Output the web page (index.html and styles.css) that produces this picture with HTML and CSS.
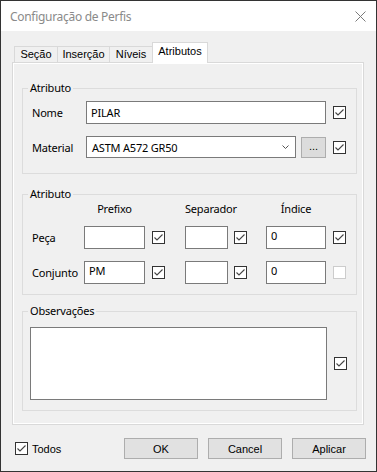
FILE: index.html
```html
<!DOCTYPE html>
<html lang="pt-BR">
<head>
  <meta charset="UTF-8" />
  <title>Configuração de Perfis</title>
  <link rel="stylesheet" href="styles.css">
</head>
<body>

<svg class="defs" width="0" height="0">
  <symbol id="chk" viewBox="0 0 13 13">
    <rect x="0.5" y="0.5" width="12" height="12" fill="#fff" stroke="#333"/>
    <path d="M2.5 6.5 L5 9 L10.5 3.5" fill="none" stroke="#444" stroke-width="1.1"/>
  </symbol>
  <symbol id="chk-off" viewBox="0 0 13 13">
    <rect x="0.5" y="0.5" width="12" height="12" fill="#fff" stroke="#ccc"/>
  </symbol>
</svg>

<div class="window">
  <div class="titlebar">
    <span class="title">Configuração de Perfis</span>
    <svg class="close" width="11" height="11" viewBox="0 0 11 11">
      <path d="M0.5 0.5 L10.5 10.5 M10.5 0.5 L0.5 10.5" stroke="#7a7a7a" stroke-width="1"/>
    </svg>
  </div>

  <div class="content">
    <div class="tabs">
      <div class="tab tab-secao">Seção</div>
      <div class="tab tab-insercao">Inserção</div>
      <div class="tab tab-niveis">Níveis</div>
      <div class="tab active">Atributos</div>
    </div>

    <div class="page">
      <fieldset class="group g-first">
        <legend>Atributo</legend>
        <div class="group-body g1">
          <div class="row">
            <label class="lbl lbl-wide" for="nome">Nome</label>
            <input class="txt txt-nome" type="text" id="nome" value="PILAR">
            <svg class="chk"><use href="#chk"/></svg>
          </div>
          <div class="row">
            <label class="lbl lbl-wide">Material</label>
            <div class="combo">
              <span>ASTM A572 GR50</span>
              <svg class="arrow" width="7" height="4" viewBox="0 0 7 4"><path d="M0.5 0.5 L3.5 3.5 L6.5 0.5" fill="none" stroke="#555"/></svg>
            </div>
            <button class="dots">...</button>
            <svg class="chk"><use href="#chk"/></svg>
          </div>
        </div>
      </fieldset>

      <fieldset class="group g-second">
        <legend>Atributo</legend>
        <div class="group-body g2">
          <div class="row head">
            <span class="lbl"></span>
            <span class="h h-pre">Prefixo</span>
            <span class="h h-sep">Separador</span>
            <span class="h h-idx">Índice</span>
          </div>
          <div class="row">
            <label class="lbl">Peça</label>
            <input class="txt sm in-pre" type="text" value="">
            <svg class="chk"><use href="#chk"/></svg>
            <input class="txt sm in-sep" type="text" value="">
            <svg class="chk chk-sep"><use href="#chk"/></svg>
            <input class="txt sm in-idx" type="text" value="0">
            <svg class="chk"><use href="#chk"/></svg>
          </div>
          <div class="row">
            <label class="lbl">Conjunto</label>
            <input class="txt sm in-pre" type="text" value="PM">
            <svg class="chk"><use href="#chk"/></svg>
            <input class="txt sm in-sep" type="text" value="">
            <svg class="chk chk-sep"><use href="#chk"/></svg>
            <input class="txt sm in-idx" type="text" value="0">
            <svg class="chk"><use href="#chk-off"/></svg>
          </div>
        </div>
      </fieldset>

      <fieldset class="group g-third">
        <legend>Observações</legend>
        <div class="group-body g3">
          <div class="row">
            <textarea class="obs"></textarea>
            <svg class="chk"><use href="#chk"/></svg>
          </div>
        </div>
      </fieldset>
    </div>

    <div class="footer">
      <svg class="chk todos-chk"><use href="#chk"/></svg>
      <span class="todos">Todos</span>
      <button class="btn btn-ok">OK</button>
      <button class="btn">Cancel</button>
      <button class="btn">Aplicar</button>
    </div>
  </div>
</div>

</body>
</html>
```

FILE: styles.css
```css
body {
  margin: 0;
  background: #fff;
  font-family: "Noto Sans", sans-serif;
  font-size: 11px;
  letter-spacing: -0.2px;
  color: #000;
}

.defs {
  position: absolute;
}

.window {
  width: 377px;
  height: 472px;
  box-sizing: border-box;
  border: 1px solid #333;
  background: #f0f0f0;
  display: flex;
  flex-direction: column;
}

.titlebar {
  height: 30px;
  flex-shrink: 0;
  background: #fff;
  display: flex;
  align-items: center;
  justify-content: space-between;
  padding: 0 10px 0 9px;
}

.title {
  font-size: 12px;
  letter-spacing: -0.3px;
  color: #8a8a8a;
}

.content {
  padding: 11px 12px 0 11px;
}

/* tabs */
.tabs {
  display: flex;
  align-items: flex-end;
  height: 20px;
  padding-left: 2px;
  position: relative;
  z-index: 1;
}

.tab {
  height: 16px;
  box-sizing: border-box;
  border: 1px solid #d9d9d9;
  border-right: none;
  border-bottom: none;
  background: #f0f0f0;
  font-family: "Liberation Sans", Arial, sans-serif;
  font-size: 11px;
  letter-spacing: 0;
  line-height: 15px;
  text-align: center;
}

.tab-secao { width: 43px; }
.tab-insercao { width: 52px; }
.tab-niveis { width: 43px; }

.tab.active {
  width: 56px;
  height: 21px;
  margin-bottom: -1px;
  background: #fff;
  border-right: 1px solid #d9d9d9;
  line-height: 17px;
}

.page {
  height: 363px;
  box-sizing: border-box;
  border: 1px solid #d9d9d9;
  box-shadow: inset 0 0 0 1px #fff;
  padding: 0 6px 0 9px;
}

/* group boxes */
.group {
  margin: 0;
  padding: 0;
  border: 1px solid #dcdcdc;
  min-width: 0;
}

.group legend {
  margin-left: 5px;
  padding: 0 2px;
  line-height: 14px;
}

.g-first { margin-top: 18px; }
.g-second { margin-top: 13px; }
.g-third { margin-top: 9px; }

.g1 { padding: 6px 0 15px 9px; }
.g2 { padding: 1px 0 10px 9px; }
.g3 { padding: 9px 0 10px 7px; }

.row {
  display: flex;
  align-items: center;
}

.g1 .row + .row { margin-top: 12px; }
.g2 .row + .row { margin-top: 12px; }
.g2 .head + .row { margin-top: 10px; }

.lbl {
  width: 52px;
  flex-shrink: 0;
}

.lbl-wide {
  width: 54px;
}

.head {
  line-height: 14px;
}

.h {
  text-align: center;
}

.h-pre { width: 61px; }
.h-sep { width: 43px; margin-left: 40px; }
.h-idx { width: 60px; margin-left: 38px; }

/* fields */
.txt {
  box-sizing: border-box;
  height: 23px;
  margin: 0;
  border: 1px solid #7a7a7a;
  padding: 0 4px;
  background: #fff;
  font-family: "Noto Sans", sans-serif;
  font-size: 11px;
  letter-spacing: -0.2px;
  color: #000;
  outline: none;
}

.txt-nome { width: 240px; }

.txt.sm {
  padding: 0 4px 5px;
}

.in-pre { width: 61px; }
.in-sep { width: 43px; margin-left: 20px; }
.in-idx { width: 60px; margin-left: 19px; }

.chk {
  width: 13px;
  height: 13px;
  flex-shrink: 0;
  margin-left: 7px;
}

.chk-sep { margin-left: 6px; }

.combo {
  box-sizing: border-box;
  width: 210px;
  height: 22px;
  border: 1px solid #7a7a7a;
  background: #fff;
  display: flex;
  align-items: center;
  justify-content: space-between;
  padding: 0 6px 0 5px;
}

.arrow {
  display: block;
}

.dots {
  box-sizing: border-box;
  width: 25px;
  height: 21px;
  margin: 0 0 0 5px;
  padding: 0 0 3px;
  border: 1px solid #adadad;
  background: #dcdcdc;
  font-family: "Liberation Sans", Arial, sans-serif;
  font-size: 11px;
  line-height: 14px;
  color: #000;
}

.obs {
  box-sizing: border-box;
  width: 297px;
  height: 73px;
  margin: 0;
  border: 1px solid #7a7a7a;
  background: #fff;
  resize: none;
  outline: none;
}

/* footer */
.footer {
  display: flex;
  align-items: center;
  margin-top: 13px;
  margin-right: -2px;
  padding-left: 3px;
}

.todos-chk {
  margin-left: 0;
}

.todos {
  margin-left: 4px;
  font-family: "Liberation Sans", Arial, sans-serif;
  font-size: 11px;
  letter-spacing: 0;
}

.btn {
  box-sizing: border-box;
  width: 74px;
  height: 21px;
  margin: 0 0 0 10px;
  padding: 0;
  border: 1px solid #adadad;
  background: #e1e1e1;
  font-family: "Liberation Sans", Arial, sans-serif;
  font-size: 11px;
  letter-spacing: 0;
  color: #000;
}

.btn-ok {
  margin-left: auto;
}
```
